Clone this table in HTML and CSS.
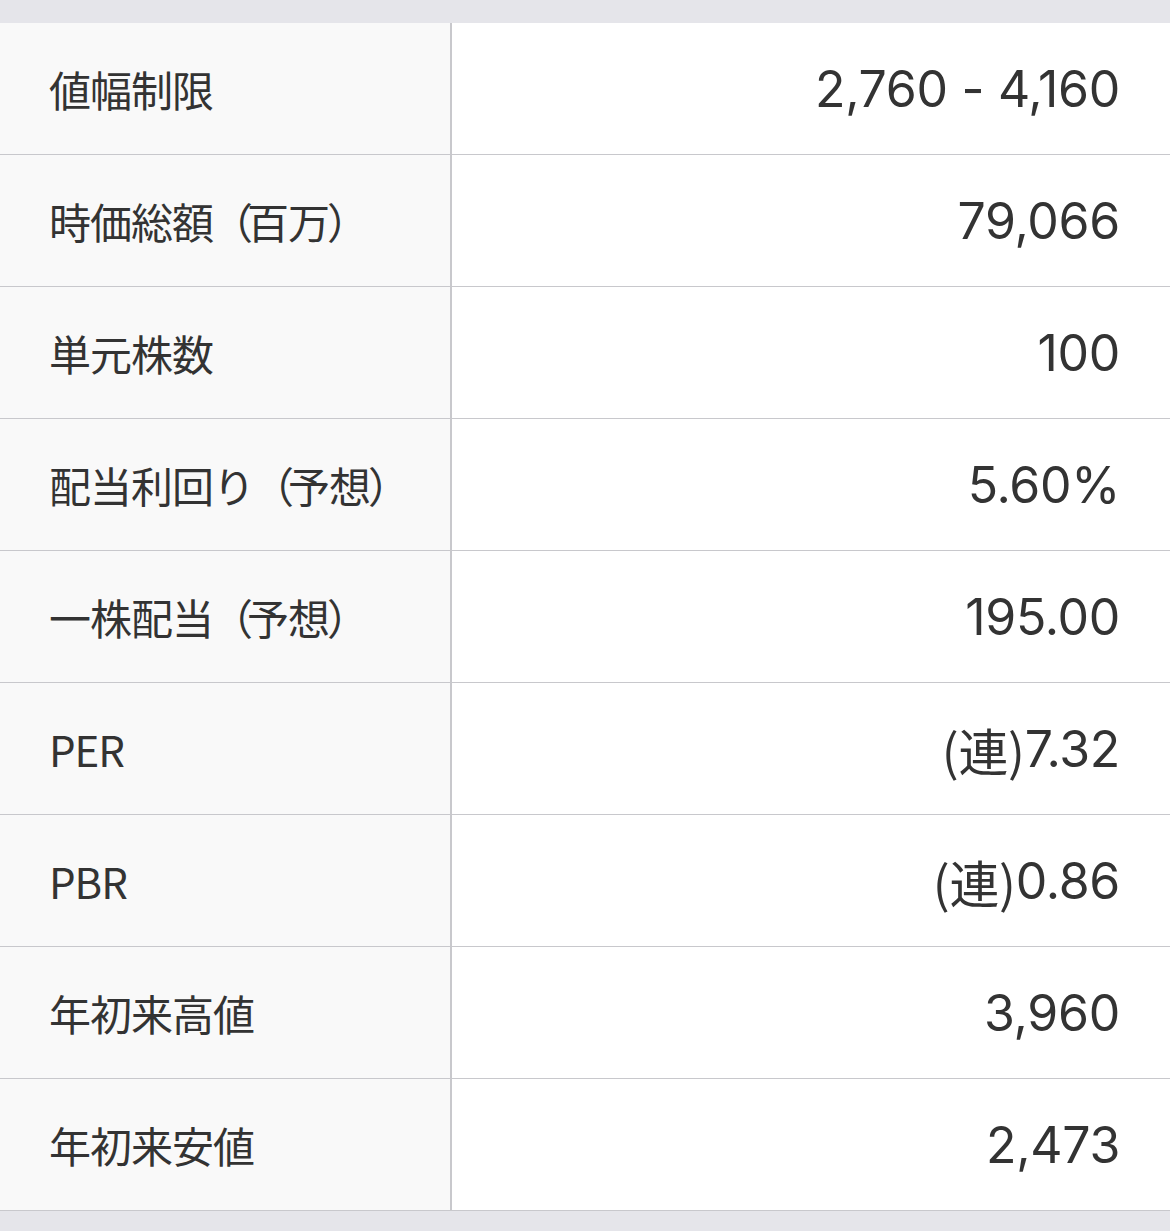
FILE: index.html
```html
<!DOCTYPE html>
<html lang="ja">
<head>
<meta charset="utf-8">
<link rel="stylesheet" href="styles.css">
</head>
<body>
<div class="page">
  <div class="band top"></div>
  <div class="table">
    <div class="row"><div class="label">値幅制限</div><div class="value">2,760 - 4,160</div></div>
    <div class="row"><div class="label">時価総額<span class="paren">（</span>百万<span class="paren">）</span></div><div class="value">79,066</div></div>
    <div class="row"><div class="label">単元株数</div><div class="value">100</div></div>
    <div class="row"><div class="label">配当利回り<span class="paren">（</span>予想<span class="paren">）</span></div><div class="value">5.60%</div></div>
    <div class="row"><div class="label">一株配当<span class="paren">（</span>予想<span class="paren">）</span></div><div class="value">195.00</div></div>
    <div class="row"><div class="label">PER</div><div class="value"><span class="cjk">(連)</span>7.32</div></div>
    <div class="row"><div class="label">PBR</div><div class="value"><span class="cjk">(連)</span>0.86</div></div>
    <div class="row"><div class="label">年初来高値</div><div class="value">3,960</div></div>
    <div class="row"><div class="label">年初来安値</div><div class="value">2,473</div></div>
  </div>
  <div class="band bottom"></div>
</div>
</body>
</html>
```

FILE: styles.css
```css
* { box-sizing: border-box; }
html, body { margin: 0; padding: 0; }
body {
  width: 1170px;
  height: 1231px;
  background: #e5e5ea;
  font-family: "Noto Sans CJK JP", "Noto Sans", sans-serif;
  color: #333333;
  overflow: hidden;
}
.page { display: flex; flex-direction: column; }
.band { background: #e5e5ea; }
.band.top { height: 23px; }
.band.bottom { height: 21px; }
.table { display: flex; flex-direction: column; }
.row {
  display: grid;
  grid-template-columns: 452px 1fr;
  height: 132px;
  border-bottom: 1px solid #c8c8cc;
}
.label {
  background: #f9f9f9;
  border-right: 2px solid #c8c8cc;
  display: flex;
  align-items: center;
  padding-left: 49px;
  font-size: 42px;
  letter-spacing: -1px;
}
.paren { letter-spacing: -6px; margin-left: -2px; }
.value {
  background: #ffffff;
  display: flex;
  align-items: center;
  justify-content: flex-end;
  padding-right: 50px;
  font-family: "Inter", "Noto Sans CJK JP", sans-serif;
  font-size: 50px;
  letter-spacing: -0.3px;
}
.cjk { font-family: "Noto Sans CJK JP", sans-serif; }
```
